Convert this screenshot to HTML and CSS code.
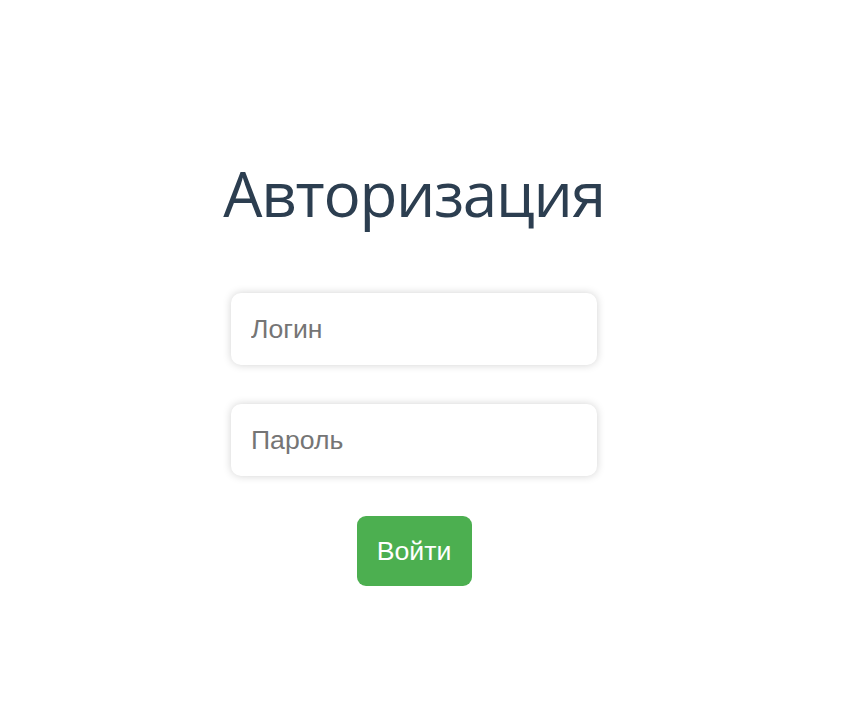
FILE: index.html
```html
<!DOCTYPE html>
<html lang="ru">
<head>
<meta charset="utf-8">
<title>Авторизация</title>
<link rel="stylesheet" href="styles.css">
</head>
<body>
<main class="page">
  <form class="login">
    <h1 class="title">Авторизация</h1>
    <input class="field" type="text" placeholder="Логин">
    <input class="field" type="password" placeholder="Пароль">
    <button class="submit" type="button">Войти</button>
  </form>
</main>
</body>
</html>
```
FILE: styles.css
```css
html, body {
  margin: 0;
  padding: 0;
  background: #fff;
}
.page {
  padding-top: 155px;
  padding-left: 231px;
}
.login {
  width: 366px;
  display: flex;
  flex-direction: column;
  align-items: center;
}
.title {
  margin: 0 0 62px;
  font-family: "Open Sans", sans-serif;
  font-weight: 400;
  font-size: 62px;
  letter-spacing: -1.3px;
  line-height: 76px;
  color: #2c3e50;
  white-space: nowrap;
}
.field {
  box-sizing: border-box;
  width: 366px;
  height: 72px;
  margin: 0 0 39px;
  padding: 0 20px;
  border: none;
  border-radius: 10px;
  background: #fff;
  box-shadow: 0 0 8px rgba(0, 0, 0, 0.18);
  font-family: "Liberation Sans", Arial, sans-serif;
  font-size: 26.6px;
  color: #333;
  outline: none;
}
.field::placeholder {
  color: #757575;
}
.field + .field {
  margin-bottom: 40px;
}
.submit {
  width: 115px;
  height: 70px;
  border: none;
  border-radius: 9px;
  background: #4caf50;
  color: #fff;
  font-family: "Liberation Sans", Arial, sans-serif;
  font-size: 26.7px;
  cursor: pointer;
}
```
